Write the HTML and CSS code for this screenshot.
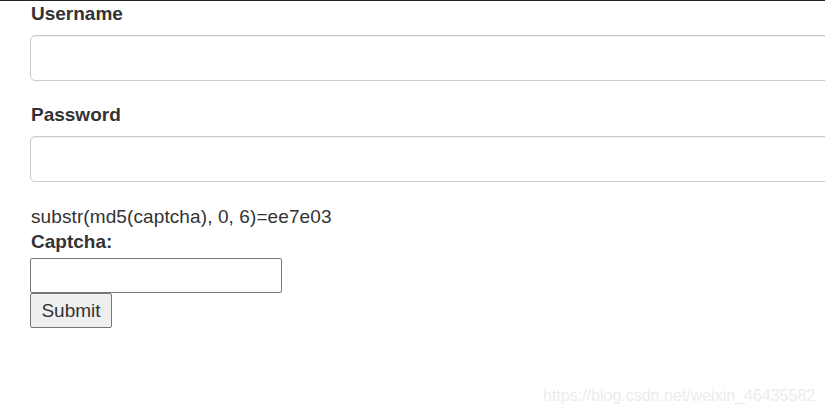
FILE: index.html
```html
<!DOCTYPE html>
<html>
<head>
<meta charset="utf-8">
<link rel="stylesheet" href="styles.css">
</head>
<body>
<div class="page">
  <form class="form">
    <div class="group">
      <label class="label">Username</label>
      <input class="field" type="text">
    </div>
    <div class="group">
      <label class="label">Password</label>
      <input class="field" type="password">
    </div>
    <div class="captcha">
      <div class="hint">substr(md5(captcha), 0, 6)=ee7e03</div>
      <label class="label small">Captcha:</label>
      <input class="plain" type="text">
      <button class="btn" type="button">Submit</button>
    </div>
  </form>
  <div class="watermark">https://blog.csdn.net/weixin_46435582</div>
</div>
</body>
</html>
```
FILE: styles.css
```css
html, body {
  margin: 0;
  padding: 0;
  background: #fff;
}
body {
  font-family: "Liberation Sans", Arial, sans-serif;
  color: #333;
  border-top: 1px solid #222;
  height: 415px;
  overflow: hidden;
  position: relative;
}
.page {
  padding: 0 0 0 30px;
}
.form {
  display: flex;
  flex-direction: column;
}
.group {
  display: flex;
  flex-direction: column;
  margin-bottom: 21px;
}
.label {
  font-weight: bold;
  font-size: 19px;
  line-height: 26px;
  margin-left: 1px;
  height: 34px;
}
.field {
  box-sizing: border-box;
  width: 820px;
  height: 46px;
  border: 1px solid #ccc;
  border-radius: 5px;
  box-shadow: inset 0 1px 1px rgba(0,0,0,0.075);
  margin: 0;
}
.captcha {
  display: flex;
  flex-direction: column;
  align-items: flex-start;
  margin-top: 3px;
}
.hint {
  font-size: 19px;
  line-height: 22px;
  margin-left: 1px;
  letter-spacing: 0.1px;
}
.label.small {
  height: auto;
  line-height: 22px;
  margin-top: 3px;
}
.plain {
  box-sizing: border-box;
  width: 252px;
  height: 35px;
  border: 1px solid #767676;
  border-radius: 2px;
  margin: 5px 0 0 0;
  padding: 0;
}
.btn {
  box-sizing: border-box;
  height: 35px;
  width: 82px;
  margin: 0;
  padding: 0;
  font-family: "Liberation Sans", Arial, sans-serif;
  font-size: 19px;
  color: #333;
  background: #efefef;
  border: 1px solid #767676;
  border-radius: 2px;
}
.watermark {
  position: absolute;
  left: 543px;
  top: 386px;
  font-size: 16px;
  color: #ececec;
}
```
